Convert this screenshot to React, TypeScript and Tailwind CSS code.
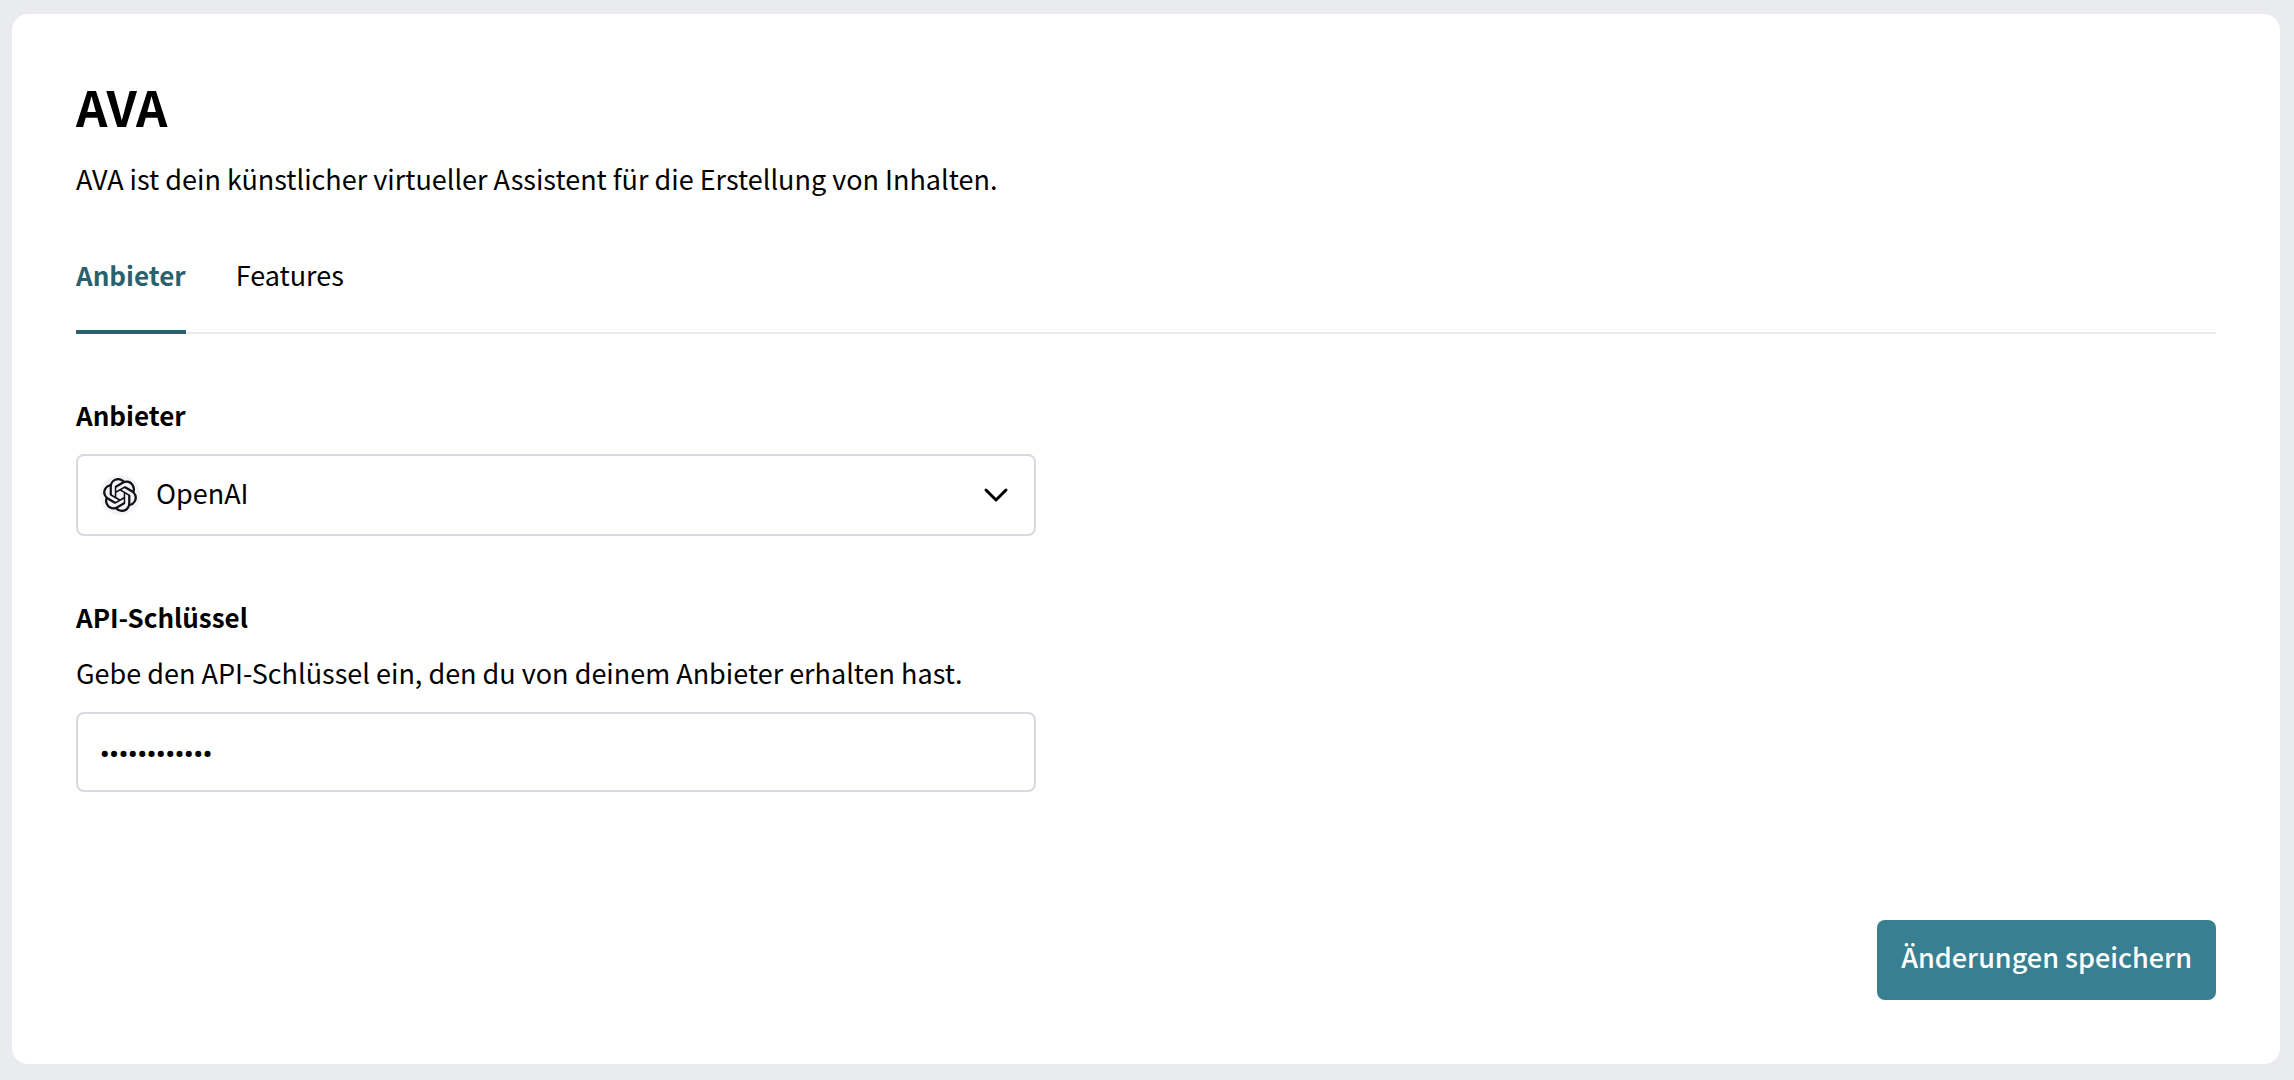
import { useState } from "react";
import { ChevronDown } from "lucide-react";
import { SiOpenai } from "react-icons/si";

interface TabButtonProps {
  label: string;
  active: boolean;
  onClick: () => void;
}

const TabButton = ({ label, active, onClick }: TabButtonProps) => {
  return (
    <button
      type="button"
      role="tab"
      aria-selected={active}
      onClick={onClick}
      className={
        active
          ? "-mb-[2px] border-b-4 border-[#2a616d] pb-[34px] text-[26px] leading-[42px] font-bold text-[#2a616d]"
          : "-mb-[2px] border-b-4 border-transparent pb-[34px]"
      }
    >
      {label}
    </button>
  );
};

const ProviderSelect = () => {
  const [provider, setProvider] = useState("openai");
  return (
    <div className="flex flex-col gap-[18px]">
      <label
        htmlFor="provider"
        className="text-[26px] leading-[42px] font-bold"
      >
        Anbieter
      </label>
      <div className="relative">
        <select
          id="provider"
          value={provider}
          onChange={(e) => setProvider(e.target.value)}
          className="block h-[82px] w-full appearance-none rounded-lg border-2 border-[#d7dbe0] bg-white pb-1 pl-[78px] pr-20"
        >
          <option value="openai">OpenAI</option>
        </select>
        <span className="pointer-events-none absolute inset-y-0 left-6 flex items-center">
          <span className="flex size-10 items-center justify-center rounded-full bg-[#f3f4f8]">
            <SiOpenai className="size-[34px] text-[#111]" />
          </span>
        </span>
        <span className="pointer-events-none absolute inset-y-0 right-5 flex items-center">
          <ChevronDown className="size-10" strokeWidth={1.8} />
        </span>
      </div>
    </div>
  );
};

const ApiKeyField = () => {
  const [apiKey, setApiKey] = useState("sk-000000000");
  return (
    <div className="flex flex-col gap-[18px]">
      <div className="flex flex-col gap-[14px]">
        <label
          htmlFor="api-key"
          className="text-[26px] leading-[42px] font-bold"
        >
          API-Schlüssel
        </label>
        <p id="api-key-hint">
          Gebe den API-Schlüssel ein, den du von deinem Anbieter erhalten hast.
        </p>
      </div>
      <input
        id="api-key"
        type="password"
        aria-describedby="api-key-hint"
        value={apiKey}
        onChange={(e) => setApiKey(e.target.value)}
        className="h-20 w-full rounded-lg border-2 border-[#d7dbe0] bg-white px-[22px] pt-1 font-[Roboto,sans-serif] text-[26px] font-bold"
      />
    </div>
  );
};

const App = () => {
  const [tab, setTab] = useState("provider");
  return (
    <div className="min-h-screen bg-[#eaebef] pt-[14px] pr-[14px] pb-4 pl-3 font-['Noto_Sans_CJK_SC','Noto_Sans',sans-serif] text-[27px] leading-[42px] text-black">
      <main className="rounded-2xl bg-white p-16">
        <h1 className="text-[49px] leading-14 font-bold">AVA</h1>
        <p className="mt-6">
          AVA ist dein künstlicher virtueller Assistent für die Erstellung von
          Inhalten.
        </p>
        <div
          role="tablist"
          className="mt-[54px] flex gap-[50px] border-b-2 border-[#eaebef]"
        >
          <TabButton
            label="Anbieter"
            active={tab === "provider"}
            onClick={() => setTab("provider")}
          />
          <TabButton
            label="Features"
            active={tab === "features"}
            onClick={() => setTab("features")}
          />
        </div>
        <form onSubmit={(e) => e.preventDefault()}>
          <div className="mt-15 flex max-w-[960px] flex-col gap-15">
            <ProviderSelect />
            <ApiKeyField />
          </div>
          <div className="mt-32 flex justify-end">
            <button
              type="submit"
              className="h-20 rounded-lg bg-[#387f91] px-6 pb-1.5 font-medium text-white"
            >
              Änderungen speichern
            </button>
          </div>
        </form>
      </main>
    </div>
  );
};

export default App;
